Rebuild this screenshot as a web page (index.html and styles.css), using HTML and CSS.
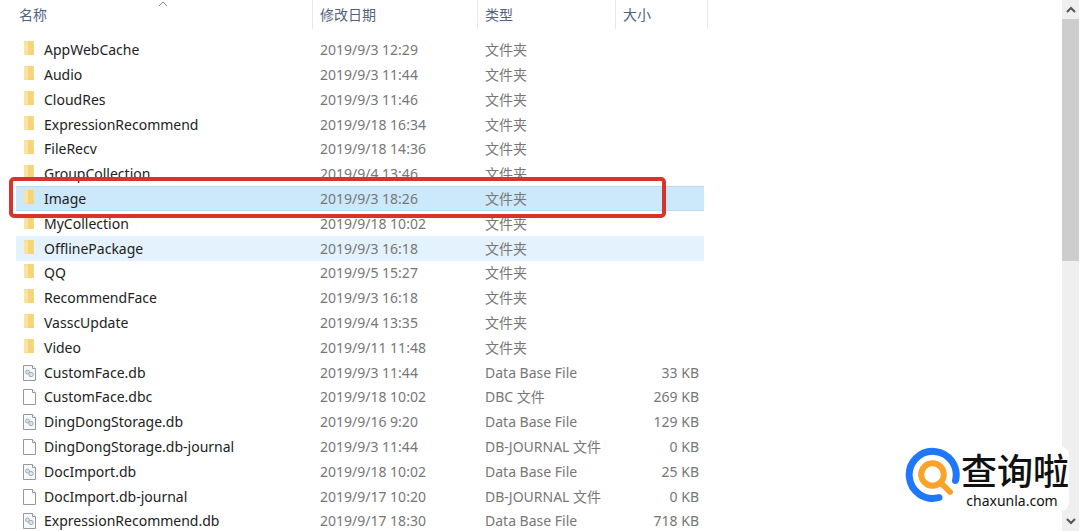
FILE: index.html
```html
<!DOCTYPE html>
<html lang="zh-CN">
<head>
<meta charset="utf-8">
<title>文件列表</title>
<link rel="stylesheet" href="styles.css">
</head>
<body>
<svg class="symbols" aria-hidden="true">
  <symbol id="folder" viewBox="0 0 16 16">
    <path fill="#f9db85" d="M3 0h10v14H3z"/>
    <path fill="#fbe3a0" d="M3 1l4-1v13l-4 1z"/>
    <path fill="#f6d47a" d="M7 0h5v9l1 1v4H7z"/>
  </symbol>
  <symbol id="page" viewBox="0 0 16 16">
    <path fill="#fdfdfd" stroke="#989898" d="M2.500 .5h9l3 3v12h-12z"/>
    <path fill="#fff" stroke="#989898" d="M11.500 .5v3h3"/>
  </symbol>
  <symbol id="database" viewBox="0 0 16 16">
    <path fill="#f6f9fb" stroke="#989898" d="M2.500 .5h9l3 3v12h-12z"/>
    <path fill="#fff" stroke="#989898" d="M11.500 .5v3h3"/>
    <g fill="#dce3e9" stroke="#a3adb5">
      <circle cx="6.500" cy="7" r="2"/>
      <circle cx="10" cy="9.500" r="2.200"/>
    </g>
  </symbol>
</svg>
<div class="window">
  <main class="pane">
    <table class="files">
      <colgroup><col class="col-name"><col class="col-date"><col class="col-type"><col class="col-size"></colgroup>
      <thead>
        <tr>
          <th scope="col" aria-sort="ascending"><button class="sort" type="button">名称</button><svg class="sort-mark" viewBox="0 0 10 6" aria-hidden="true"><path d="M1 5l4-4 4 4"/></svg></th>
          <th scope="col"><button class="sort" type="button">修改日期</button></th>
          <th scope="col"><button class="sort" type="button">类型</button></th>
          <th scope="col"><button class="sort" type="button">大小</button></th>
        </tr>
      </thead>
      <tbody>
        <tr><td><span class="name"><svg class="icon folder"><use href="#folder"/></svg>AppWebCache</span></td><td>2019/9/3 12:29</td><td>文件夹</td><td></td></tr>
        <tr><td><span class="name"><svg class="icon folder"><use href="#folder"/></svg>Audio</span></td><td>2019/9/3 11:44</td><td>文件夹</td><td></td></tr>
        <tr><td><span class="name"><svg class="icon folder"><use href="#folder"/></svg>CloudRes</span></td><td>2019/9/3 11:46</td><td>文件夹</td><td></td></tr>
        <tr><td><span class="name"><svg class="icon folder"><use href="#folder"/></svg>ExpressionRecommend</span></td><td>2019/9/18 16:34</td><td>文件夹</td><td></td></tr>
        <tr><td><span class="name"><svg class="icon folder"><use href="#folder"/></svg>FileRecv</span></td><td>2019/9/18 14:36</td><td>文件夹</td><td></td></tr>
        <tr><td><span class="name"><svg class="icon folder"><use href="#folder"/></svg>GroupCollection</span></td><td>2019/9/4 13:46</td><td>文件夹</td><td></td></tr>
        <tr class="selected"><td><span class="name"><svg class="icon folder"><use href="#folder"/></svg>Image</span><span class="marker"></span></td><td>2019/9/3 18:26</td><td>文件夹</td><td></td></tr>
        <tr><td><span class="name"><svg class="icon folder"><use href="#folder"/></svg>MyCollection</span></td><td>2019/9/18 10:02</td><td>文件夹</td><td></td></tr>
        <tr class="hovered"><td><span class="name"><svg class="icon folder"><use href="#folder"/></svg>OfflinePackage</span></td><td>2019/9/3 16:18</td><td>文件夹</td><td></td></tr>
        <tr><td><span class="name"><svg class="icon folder"><use href="#folder"/></svg>QQ</span></td><td>2019/9/5 15:27</td><td>文件夹</td><td></td></tr>
        <tr><td><span class="name"><svg class="icon folder"><use href="#folder"/></svg>RecommendFace</span></td><td>2019/9/3 16:18</td><td>文件夹</td><td></td></tr>
        <tr><td><span class="name"><svg class="icon folder"><use href="#folder"/></svg>VasscUpdate</span></td><td>2019/9/4 13:35</td><td>文件夹</td><td></td></tr>
        <tr><td><span class="name"><svg class="icon folder"><use href="#folder"/></svg>Video</span></td><td>2019/9/11 11:48</td><td>文件夹</td><td></td></tr>
        <tr><td><span class="name"><svg class="icon"><use href="#database"/></svg>CustomFace.db</span></td><td>2019/9/3 11:44</td><td>Data Base File</td><td>33 KB</td></tr>
        <tr><td><span class="name"><svg class="icon"><use href="#page"/></svg>CustomFace.dbc</span></td><td>2019/9/18 10:02</td><td>DBC 文件</td><td>269 KB</td></tr>
        <tr><td><span class="name"><svg class="icon"><use href="#database"/></svg>DingDongStorage.db</span></td><td>2019/9/16 9:20</td><td>Data Base File</td><td>129 KB</td></tr>
        <tr><td><span class="name"><svg class="icon"><use href="#page"/></svg>DingDongStorage.db-journal</span></td><td>2019/9/3 11:44</td><td>DB-JOURNAL 文件</td><td>0 KB</td></tr>
        <tr><td><span class="name"><svg class="icon"><use href="#database"/></svg>DocImport.db</span></td><td>2019/9/18 10:02</td><td>Data Base File</td><td>25 KB</td></tr>
        <tr><td><span class="name"><svg class="icon"><use href="#page"/></svg>DocImport.db-journal</span></td><td>2019/9/17 10:20</td><td>DB-JOURNAL 文件</td><td>0 KB</td></tr>
        <tr><td><span class="name"><svg class="icon"><use href="#database"/></svg>ExpressionRecommend.db</span></td><td>2019/9/17 18:30</td><td>Data Base File</td><td>718 KB</td></tr>
      </tbody>
    </table>
  </main>
  <div class="scrollbar">
    <button class="scroll-arrow" type="button" aria-label="向上滚动"><svg viewBox="0 0 10 7"><path d="M1 6l4-4 4 4"/></svg></button>
    <div class="track"><div class="thumb"></div></div>
    <button class="scroll-arrow" type="button" aria-label="向下滚动"><svg viewBox="0 0 10 7"><path d="M1 1l4 4 4-4"/></svg></button>
  </div>
  <div class="brand">
    <svg class="brand-logo" viewBox="0 0 56 56" aria-hidden="true">
      <path fill="none" stroke="#1f78fb" stroke-width="7" stroke-linecap="round" d="M34 50.500A23.500 23.500 0 1 1 50.500 33.500"/>
      <circle cx="27.500" cy="27.500" r="11.300" fill="none" stroke="#faa32b" stroke-width="6"/>
      <path stroke="#faa32b" stroke-width="6" stroke-linecap="round" d="M36 36l9 9"/>
    </svg>
    <div class="brand-text"><span class="brand-name">查询啦</span><span class="brand-site">chaxunla.com</span></div>
  </div>
</div>
</body>
</html>
```
FILE: styles.css
```css
* { box-sizing: border-box; }

body {
  margin: 0;
  background: #fff;
  color: #777;
  font: 14px/20px "Noto Sans", "Noto Sans CJK SC", sans-serif;
}

button {
  padding: 0;
  border: 0;
  background: none;
  color: inherit;
  font: inherit;
}

.symbols { position: absolute; width: 0; height: 0; }

.window {
  position: relative;
  display: flex;
  height: 100vh;
  overflow: hidden;
}

.pane { flex: 1; min-width: 0; overflow: hidden; padding-left: 16px; }

.files {
  width: 692px;
  table-layout: fixed;
  border-spacing: 0;
  white-space: nowrap;
}

.col-name { width: 297px; }
.col-date { width: 165px; }
.col-type { width: 138px; }
.col-size { width: 92px; }

th {
  position: relative;
  height: 29px;
  padding: 0 7px;
  border-right: 1px solid #e8e8e8;
  color: #53637f;
  font-weight: 400;
  text-align: left;
}
th:first-child { padding-left: 3px; }

.sort-mark {
  position: absolute;
  top: 1px;
  left: 48%;
  width: 10px;
  height: 6px;
  fill: none;
  stroke: #888;
}

tbody::before { content: ""; display: block; height: 8px; }

td { height: 25px; padding: 0 7px; }
tr:nth-child(5n) td { height: 24px; }
td:first-child { position: relative; padding-left: 5px; color: #222; }
td:last-child {
  padding: 0 5px;
  border-right: 4px solid transparent;
  background-clip: padding-box;
  text-align: right;
}

.name { display: flex; align-items: center; gap: 7px; }
.icon { width: 16px; height: 16px; flex: none; }
.folder { margin-bottom: 2px; }

.selected td {
  background-color: #cce8fb;
  box-shadow: inset 0 1px #b8dcf5, inset 0 -1px #b8dcf5;
}
.hovered td { background-color: #e4f2fd; }

.marker {
  position: absolute;
  z-index: 1;
  top: -9px;
  left: -7px;
  width: 657px;
  height: 41px;
  border: 4px solid #d8342c;
  border-radius: 5px;
}

.scrollbar {
  display: flex;
  flex-direction: column;
  width: 17px;
  margin-right: 1px;
  background: #efefef;
}
.scroll-arrow { display: grid; place-items: center; height: 19px; }
.scroll-arrow svg { width: 10px; height: 7px; fill: none; stroke: #555; stroke-width: 2; }
.track { flex: 1; }
.thumb { height: 49%; background: #cdcdcd; }

.brand {
  position: absolute;
  right: 11px;
  bottom: 20px;
  display: flex;
  align-items: flex-start;
  border-radius: 8px;
  background: #fff;
  color: #111;
}
.brand-logo { width: 56px; height: 56px; }
.brand-text { display: flex; flex-direction: column; align-items: center; }
.brand-name { font: 500 36px/44px "Noto Sans CJK SC", sans-serif; }
.brand-site { margin-right: 6px; font: 14px/20px "Noto Sans", sans-serif; }
```
